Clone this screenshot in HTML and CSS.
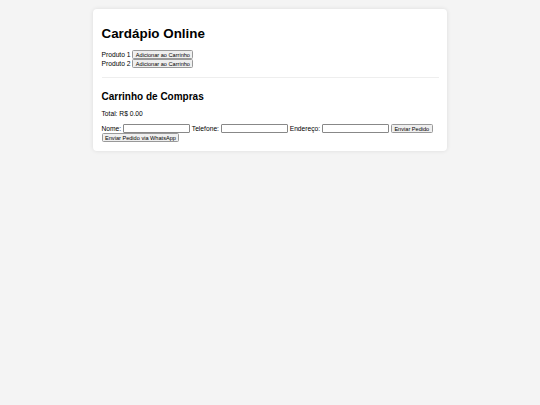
FILE: index.html
```html
<!DOCTYPE html>
<html lang="pt-BR">
<head>
    <meta charset="UTF-8">
    <meta name="viewport" content="width=device-width, initial-scale=1.0">
    <title>Cardápio Online</title>
    <link rel="stylesheet" href="styles.css">
</head>
<body>
    <div class="container">
        <h1>Cardápio Online</h1>
        <div class="menu" id="menu">
            <div class="item">Produto 1 <button class="btn">Adicionar ao Carrinho</button></div>
            <div class="item">Produto 2 <button class="btn">Adicionar ao Carrinho</button></div>
        </div>

        <div class="cart">
            <h2>Carrinho de Compras</h2>
            <ul class="cart-items" id="cart-items"></ul>
            <p class="total">Total: R$ <span id="total">0.00</span></p>
            <form class="order-form" id="order-form">
                <label for="nome">Nome:</label>
                <input type="text" id="nome">
                <label for="telefone">Telefone:</label>
                <input type="text" id="telefone">
                <label for="endereco">Endereço:</label>
                <input type="text" id="endereco">
                <button type="submit" class="btn">Enviar Pedido</button>
            </form>
            <button class="btn" id="whatsapp">Enviar Pedido via WhatsApp</button>
        </div>
    </div>
</body>
</html>
```

FILE: styles.css
```css
body {
    font-family: "Liberation Sans", Arial, sans-serif;
    font-size: 6.7px;
    background-color: #f4f4f4;
    color: #000;
    margin: 0;
    padding: 9px 0;
}

.container {
    width: 337px;
    margin: 0 auto;
    background-color: #fff;
    padding: 8.4px;
    border-radius: 4px;
    box-shadow: 0 0 4px rgba(0, 0, 0, 0.1);
}

h1 {
    font-size: 13.4px;
    margin: 9px 0;
}

h2 {
    font-size: 10px;
    margin: 8.3px 0;
}

.menu {
    margin-bottom: 8.5px;
}

.cart {
    border-top: 1px solid #eee;
    padding-top: 5px;
}

.cart-items {
    margin: 0;
    padding: 0;
    list-style: none;
}

.total {
    margin: 6.7px 0;
}

.order-form {
    display: inline;
}

.btn {
    font-family: "Liberation Sans", Arial, sans-serif;
    font-size: 5.6px;
    padding: 0.5px 2.5px;
    background-color: #efefef;
    border: 1px solid #999;
    border-radius: 1.5px;
    color: #000;
    cursor: pointer;
}

input {
    font-family: "Liberation Sans", Arial, sans-serif;
    font-size: 5.6px;
    width: 63px;
    height: 6px;
    padding: 0.5px 1px;
    border: 1px solid #888;
    border-radius: 1px;
}
```
